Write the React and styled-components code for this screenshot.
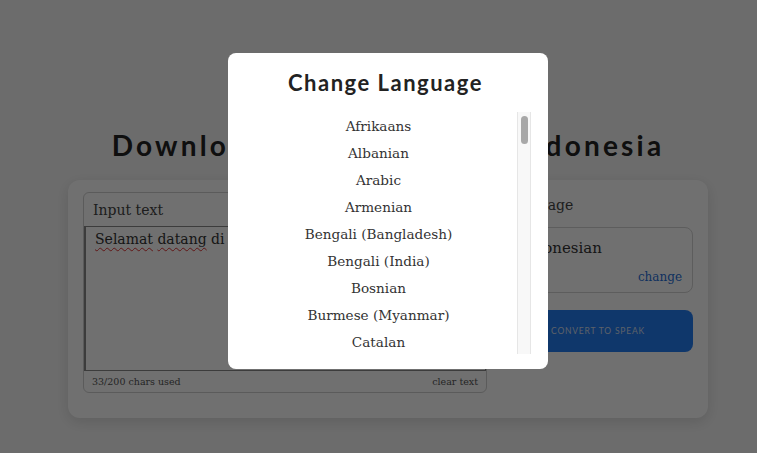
import React from "react";
import styled, { createGlobalStyle } from "styled-components";

const GlobalStyle = createGlobalStyle`
  html, body {
    margin: 0;
    padding: 0;
    overflow: hidden;
    background: #f6f6f6;
    font-family: "DejaVu Serif", "Liberation Serif", serif;
    color: #333;
  }
  * { box-sizing: border-box; }
`;

const languages = [
  "Afrikaans", "Albanian", "Arabic", "Armenian", "Bengali (Bangladesh)",
  "Bengali (India)", "Bosnian", "Burmese (Myanmar)", "Catalan", "Chinese",
  "Croatian", "Czech", "Danish", "Dutch", "English (Australia)",
  "English (UK)", "English (US)", "Esperanto", "Estonian", "Filipino",
  "Finnish", "French", "French (Canada)", "German", "Greek", "Gujarati",
  "Hindi", "Hungarian", "Icelandic", "Indonesian", "Italian", "Japanese",
  "Javanese", "Kannada", "Khmer", "Korean", "Latin", "Latvian",
  "Malayalam", "Marathi", "Nepali", "Norwegian", "Polish", "Portuguese",
  "Romanian", "Russian", "Serbian", "Sinhala", "Slovak", "Spanish",
  "Sundanese", "Swahili", "Swedish", "Tamil", "Telugu", "Thai",
  "Turkish", "Ukrainian", "Urdu", "Vietnamese", "Welsh",
];

// the page is laid out a bit wider than the window, so everything centres at 388
const Shell = styled.div`
  position: relative;
  width: 776px;
  height: 453px;
`;

const Page = styled.main`
  height: 453px;
  padding-top: 128px;
  display: flex;
  flex-direction: column;
  align-items: center;
`;

const Title = styled.h1`
  margin: 0 0 18px;
  line-height: 34px;
  font-family: "Lato", "Noto Sans", sans-serif;
  font-weight: 700;
  font-size: 28px;
  letter-spacing: 3.2px;
  color: #222;
  white-space: nowrap;
`;

const Card = styled.section`
  width: 640px;
  height: 238px;
  background: #fff;
  border-radius: 12px;
  box-shadow: 0 4px 14px rgba(0, 0, 0, 0.12);
  padding: 12px 15px;
  display: grid;
  grid-template-columns: 404px 1fr;
  gap: 16px;
`;

const InputBox = styled.div`
  height: 201px;
  border: 1px solid #cfcfcf;
  border-radius: 6px;
  display: flex;
  flex-direction: column;
`;

const InputHead = styled.div`
  height: 33px;
  padding: 0 9px;
  display: flex;
  align-items: center;
  font-size: 14px;
  color: #444;
`;

const TextArea = styled.div`
  flex: 1;
  border: 1px solid #8a8a8a;
  border-width: 1px 1px 1px 2px;
  padding: 4px 9px;
  font-size: 14px;
  color: #333;
`;

const Squiggle = styled.span`
  text-decoration: underline wavy #d33;
  text-decoration-thickness: 1px;
  text-underline-offset: 3px;
`;

const InputFoot = styled.div`
  height: 21px;
  padding: 0 8px;
  display: flex;
  align-items: center;
  justify-content: space-between;
  font-size: 9.5px;
  color: #555;
`;

const Side = styled.div`
  display: flex;
  flex-direction: column;
`;

const Label = styled.div`
  font-size: 14px;
  color: #444;
  margin: 5px 0 14px;
`;

const LangBox = styled.div`
  height: 66px;
  border: 1px solid #d4d4d4;
  border-radius: 8px;
  padding: 11px 10px 8px 14px;
  display: flex;
  flex-direction: column;
  justify-content: space-between;
  font-size: 15px;
  color: #333;
`;

const ChangeLink = styled.a`
  align-self: flex-end;
  font-size: 12px;
  color: #1f6fd8;
  cursor: pointer;
`;

const ConvertButton = styled.button`
  margin-top: 17px;
  height: 42px;
  border: none;
  border-radius: 8px;
  background: #247df3;
  color: #d2def0;
  font-family: "Lato", "Noto Sans", sans-serif;
  font-size: 8.5px;
  letter-spacing: 0.8px;
  text-transform: uppercase;
`;

const Overlay = styled.div`
  position: absolute;
  inset: 0;
  background: rgba(0, 0, 0, 0.56);
  display: flex;
  justify-content: center;
  align-items: flex-start;
  padding-top: 53px;
`;

const Modal = styled.div`
  width: 320px;
  height: 316px;
  background: #fff;
  border-radius: 8px;
  padding: 17px 17px 14px 12px;
  display: flex;
  flex-direction: column;
`;

const ModalTitle = styled.h2`
  margin: 0 0 16px;
  line-height: 26px;
  text-align: center;
  font-family: "Lato", "Noto Sans", sans-serif;
  font-weight: 700;
  font-size: 22px;
  letter-spacing: 1.5px;
  color: #222;
`;

const ListWrap = styled.div`
  height: 242px;
  display: flex;
`;

const List = styled.ul`
  flex: 1;
  margin: 0;
  padding: 0;
  list-style: none;
  overflow-y: scroll;
  scrollbar-width: none;
`;

const Item = styled.li`
  height: 27px;
  display: flex;
  align-items: center;
  justify-content: center;
  font-size: 13.6px;
  color: #333;
  cursor: pointer;
`;

const ScrollTrack = styled.div`
  width: 14px;
  background: #f8f8f8;
  border-left: 1px solid #e6e6e6;
  border-right: 1px solid #e6e6e6;
  padding: 4px 2px 0 3px;
`;

const ScrollThumb = styled.div`
  height: 28px;
  border-radius: 4px;
  background: #a8a8a8;
`;

export default function App() {
  return (
    <Shell>
      <GlobalStyle />
      <Page>
        <Title>Download Text To Speech Indonesia</Title>
        <Card>
          <InputBox>
            <InputHead>Input text</InputHead>
            <TextArea>
              <Squiggle>Selamat</Squiggle> <Squiggle>datang</Squiggle> di situs web kami.
            </TextArea>
            <InputFoot>
              <span>33/200 chars used</span>
              <span>clear text</span>
            </InputFoot>
          </InputBox>
          <Side>
            <Label>Language</Label>
            <LangBox>
              <span>Indonesian</span>
              <ChangeLink>change</ChangeLink>
            </LangBox>
            <ConvertButton>Convert to speak</ConvertButton>
          </Side>
        </Card>
      </Page>
      <Overlay>
        <Modal>
          <ModalTitle>Change Language</ModalTitle>
          <ListWrap>
            <List>
              {languages.map((name) => (
                <Item key={name}>{name}</Item>
              ))}
            </List>
            <ScrollTrack>
              <ScrollThumb />
            </ScrollTrack>
          </ListWrap>
        </Modal>
      </Overlay>
    </Shell>
  );
}
